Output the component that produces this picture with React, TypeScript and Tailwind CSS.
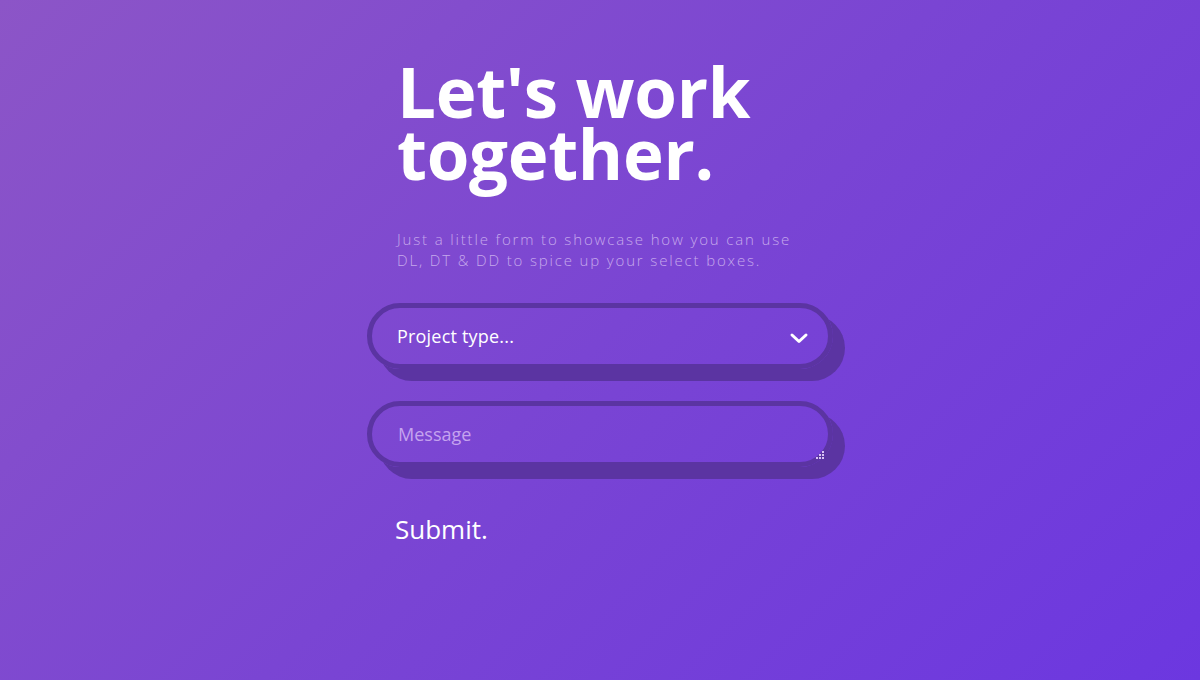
import React from "react";

export default function App() {
  return (
    <div className="w-[1200px] h-[680px] overflow-hidden bg-[linear-gradient(135deg,#8c55c7_0%,#7a45d3_50%,#6c37e0_100%)] flex justify-center" style={{ fontFamily: '"Open Sans", "Liberation Sans", sans-serif' }}>
      <div className="w-[466px] flex flex-col pt-[60px]">
        <h1 className="pl-[30px] text-white font-bold text-[69px] leading-[62px] tracking-[-0.3px]" style={{ fontFamily: '"Open Sans", sans-serif' }}>
          <span className="block">Let's work</span>
          <span className="block">together.</span>
        </h1>
        <p className="pl-[30px] mt-[45px] text-[15px] leading-[21px] tracking-[1.85px] text-[#c6a8ec] font-light">
          Just a little form to showcase how you can use<br />DL, DT &amp; DD to spice up your select boxes.
        </p>
        <div className="mt-[32px] h-[66px] rounded-full border-[5px] border-[#5b34a2] shadow-[12px_12px_0_0_#5b34a2] flex items-center justify-between pl-[25px] pr-[18px]">
          <span className="text-white text-[18px] tracking-[0.2px]">Project type...</span>
          <svg width="20" height="14" viewBox="0 0 20 14" className="mr-[1px] mt-[3px]">
            <path d="M3 4 L10 10.5 L17 4" fill="none" stroke="white" strokeWidth="3" strokeLinecap="round" strokeLinejoin="round" />
          </svg>
        </div>
        <div className="relative mt-[32px] h-[66px] rounded-full border-[5px] border-[#5b34a2] shadow-[12px_12px_0_0_#5b34a2] flex items-center pl-[26px]">
          <span className="text-[#c5a3ef] text-[18px]">Message</span>
          <svg width="9" height="9" viewBox="0 0 9 9" className="absolute right-[3px] bottom-[2px]">
            <rect x="6" y="0" width="2" height="2" fill="#d8c2f5" />
            <rect x="3" y="3" width="2" height="2" fill="#d8c2f5" />
            <rect x="6" y="3" width="2" height="2" fill="#d8c2f5" />
            <rect x="0" y="6" width="2" height="2" fill="#d8c2f5" />
            <rect x="3" y="6" width="2" height="2" fill="#d8c2f5" />
            <rect x="6" y="6" width="2" height="2" fill="#d8c2f5" />
          </svg>
        </div>
        <div className="mt-[47px] pl-[28px] text-white text-[26px] leading-[30px]">Submit.</div>
      </div>
    </div>
  );
}
